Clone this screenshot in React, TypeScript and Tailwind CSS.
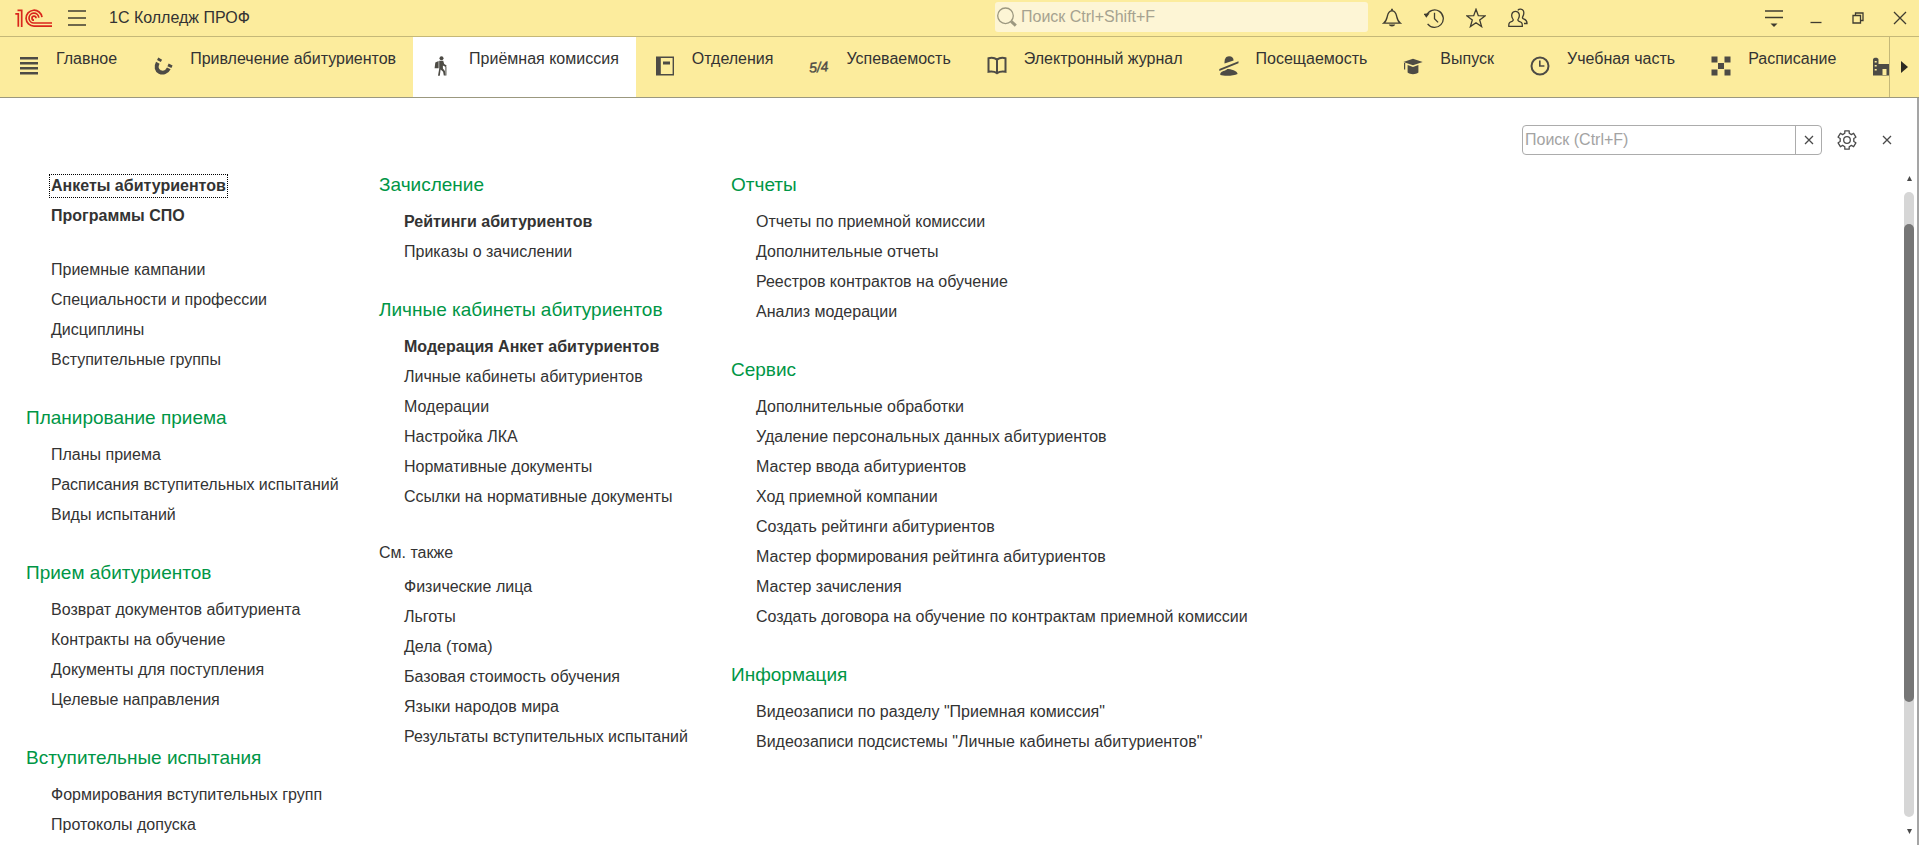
import type { ReactNode } from "react";
import clsx from "clsx";

interface Item {
    name: string;
    bold?: boolean;
    focused?: boolean;
}

interface Group {
    title?: string;
    plain?: boolean;
    items: Item[];
}

interface Tab {
    name: string;
    icon: ReactNode;
    active?: boolean;
}

const list = (...names: string[]): Item[] => names.map((name) => ({ name }));

const columns: Group[][] = [
    [
        {
            items: [
                { name: "Анкеты абитуриентов", bold: true, focused: true },
                { name: "Программы СПО", bold: true },
            ],
        },
        {
            items: list(
                "Приемные кампании",
                "Специальности и профессии",
                "Дисциплины",
                "Вступительные группы"
            ),
        },
        {
            title: "Планирование приема",
            items: list(
                "Планы приема",
                "Расписания вступительных испытаний",
                "Виды испытаний"
            ),
        },
        {
            title: "Прием абитуриентов",
            items: list(
                "Возврат документов абитуриента",
                "Контракты на обучение",
                "Документы для поступления",
                "Целевые направления"
            ),
        },
        {
            title: "Вступительные испытания",
            items: list("Формирования вступительных групп", "Протоколы допуска"),
        },
    ],
    [
        {
            title: "Зачисление",
            items: [
                { name: "Рейтинги абитуриентов", bold: true },
                { name: "Приказы о зачислении" },
            ],
        },
        {
            title: "Личные кабинеты абитуриентов",
            items: [
                { name: "Модерация Анкет абитуриентов", bold: true },
                ...list(
                    "Личные кабинеты абитуриентов",
                    "Модерации",
                    "Настройка ЛКА",
                    "Нормативные документы",
                    "Ссылки на нормативные документы"
                ),
            ],
        },
        {
            title: "См. также",
            plain: true,
            items: list(
                "Физические лица",
                "Льготы",
                "Дела (тома)",
                "Базовая стоимость обучения",
                "Языки народов мира",
                "Результаты вступительных испытаний"
            ),
        },
    ],
    [
        {
            title: "Отчеты",
            items: list(
                "Отчеты по приемной комиссии",
                "Дополнительные отчеты",
                "Реестров контрактов на обучение",
                "Анализ модерации"
            ),
        },
        {
            title: "Сервис",
            items: list(
                "Дополнительные обработки",
                "Удаление персональных данных абитуриентов",
                "Мастер ввода абитуриентов",
                "Ход приемной компании",
                "Создать рейтинги абитуриентов",
                "Мастер формирования рейтинга абитуриентов",
                "Мастер зачисления",
                "Создать договора на обучение по контрактам приемной комиссии"
            ),
        },
        {
            title: "Информация",
            items: list(
                'Видеозаписи по разделу "Приемная комиссия"',
                'Видеозаписи подсистемы "Личные кабинеты абитуриентов"'
            ),
        },
    ],
];

// Section icons, filled
const Glyph = ({ children }: { children: ReactNode }) => (
    <svg
        viewBox="0 0 20 20"
        className="size-5 shrink-0 overflow-visible"
        fill="#4d4b45"
        aria-hidden="true"
    >
        {children}
    </svg>
);

// Title bar icons, outlined
const Line = ({ children }: { children: ReactNode }) => (
    <svg
        viewBox="0 0 20 20"
        className="size-5 shrink-0"
        fill="none"
        stroke="#3f3c30"
        strokeWidth="1.3"
        aria-hidden="true"
    >
        {children}
    </svg>
);

const tabs: Tab[] = [
    {
        name: "Главное",
        icon: <path d="M1 1h18v2.400H1zM1 6h18v2.400H1zM1 11h18v2.400H1zM1 16h18v2.400H1z" />,
    },
    {
        name: "Привлечение абитуриентов",
        icon: (
            <>
                <path
                    d="M4.800 6.800C2.600 10.800 3.600 14.400 6.600 15.900C10 17.500 14 16.200 15.800 12.400"
                    fill="none"
                    stroke="#4d4b45"
                    strokeWidth="4"
                />
                <path d="M5.300 1.600l3.800 2.200-1.300 2.300L4 3.900zM15.700 7.600l3.900 2-1.200 2.500-4-1.800z" />
            </>
        ),
    },
    {
        name: "Приёмная комиссия",
        active: true,
        icon: (
            <>
                <circle cx="9.500" cy="2.300" r="2" />
                <path d="M3.300 6.500L6.600 5v7.200H2.600z" />
                <path d="M7.200 4.800h4l1 3.200 2.400 1.600-.8 1.400-2.900-1.500v3.100l2 2.400.6 4.500h-1.700l-.7-3.800-2.500-2.300-.8 6.300H6l1.200-7z" />
                <path d="M13.400 10.500h1v9h-1z" />
            </>
        ),
    },
    {
        name: "Отделения",
        icon: (
            <>
                <path
                    d="M1 .5h18v19H1zM5.800 2v16H17.600V2z"
                    fillRule="evenodd"
                />
                <path d="M8 5.500h7v3H8z" />
            </>
        ),
    },
    {
        name: "Успеваемость",
        icon: (
            <text
                x="0"
                y="16"
                fontSize="14"
                fontStyle="italic"
                stroke="#4d4b45"
                strokeWidth="0.4"
                transform="rotate(-5 10 12)"
                fontFamily="Liberation Sans, sans-serif"
            >
                5/4
            </text>
        ),
    },
    {
        name: "Электронный журнал",
        icon: (
            <path
                d="M10 3.600C8 2 4 1.600 1.500 2.200v13.600c3-.5 6-.3 8.500 1.400 2.500-1.700 5.500-1.900 8.500-1.400V2.200C16 1.600 12 2 10 3.600zV17"
                fill="none"
                stroke="#4d4b45"
                strokeWidth="2"
            />
        ),
    },
    {
        name: "Посещаемость",
        icon: (
            <>
                <path d="M5.500 7.600C5.300 3 6.800.3 10 .3s4.500 2 4.600 4.200z" />
                <path d="M.3 13.100L19.500 5.300v1.900L.3 15zM1.300 17.500c1-2.500 5-2.500 7-4.500 3.500 0 10 1.500 10.300 5-4 2.200-14 2.200-17.300 1z" />
            </>
        ),
    },
    {
        name: "Выпуск",
        icon: (
            <>
                <path d="M.3 6L10 2.800 19.700 6 10 9.200z" />
                <path d="M4.600 9l5.400 1.900L15.400 9v7.600c-2.800 2.200-8 2.200-10.800 0zM1 7h1.200v6.400H1z" />
            </>
        ),
    },
    {
        name: "Учебная часть",
        icon: (
            <>
                <circle cx="10" cy="10" r="8.500" fill="none" stroke="#4d4b45" strokeWidth="2" />
                <path d="M9.800 4.500V10h4.600" fill="none" stroke="#4d4b45" strokeWidth="1.600" />
            </>
        ),
    },
    {
        name: "Расписание",
        icon: (
            <path d="M.5.5h6v6h-6zM13.500 .5h6v6h-6zM7 7h6v6H7zM.5 13.500h6v6h-6zM13.500 13.500h6v6h-6z" />
        ),
    },
    {
        name: "",
        icon: (
            <path
                d="M1 3.500C1 1 6.500 1 6.500 3.500V8H20v11.500H1zM2.700 5v1.500h2V5zM2.700 9v1.500h2V9zM2.700 13v1.500h2V13zM10.500 13v6h4v-6z"
                fillRule="evenodd"
            />
        ),
    },
];

const Logo = () => (
    <svg viewBox="0 0 38 20" className="h-5 w-[38px]" fill="none" stroke="#d9261c" strokeWidth="1.700" aria-hidden="true">
        <path d="M.3 5.800h3v13" />
        <path d="M2.500 2.400h4.200v16.500" />
        <path d="M27 9.200A8 8 0 1 0 19 18.200h18" />
        <path d="M23.800 9.800A4.900 4.900 0 1 0 19 15h18" />
        <path d="M21 10.200A2 2 0 1 0 19 12.200" />
    </svg>
);

const BarButton = ({ label, children }: { label: string; children: ReactNode }) => (
    <button
        type="button"
        aria-label={label}
        className="flex h-9 w-[42px] shrink-0 items-center justify-center hover:bg-[#f3df7c]"
    >
        <Line>{children}</Line>
    </button>
);

const TitleBar = () => (
    <header className="grid h-[37px] shrink-0 grid-cols-[995fr_373fr_551fr] border-b border-[#c5b878]">
        <div className="flex items-center pl-[15px]">
            <Logo />
            <button type="button" aria-label="Меню" className="ml-3 flex size-6 items-center justify-center">
                <Line>
                    <path d="M1 3h18M1 10h18M1 17h18" strokeWidth="1.600" />
                </Line>
            </button>
            <h1 className="ml-5 leading-5">1С Колледж ПРОФ</h1>
        </div>

        <label className="mt-0.5 flex h-[30px] items-center rounded-[3px] bg-[#fdf5d5] pl-0.5">
            <svg viewBox="0 0 20 20" className="size-5" fill="none" stroke="#9c9880" aria-hidden="true">
                <circle cx="8.500" cy="8.800" r="7.800" strokeWidth="1.300" />
                <path d="M14.200 14.400l4.600 4.200" strokeWidth="3" />
            </svg>
            <input
                type="text"
                aria-label="Поиск"
                placeholder="Поиск Ctrl+Shift+F"
                className="ml-1 min-w-0 flex-1 bg-transparent leading-5 outline-none placeholder:text-[#a6a290]"
            />
        </label>

        <div className="flex pl-[3px]">
            <BarButton label="Уведомления">
                <path d="M1.500 15.200h17c-3-2-3.200-4-3.900-7.200C14 5 12.500 2.800 10 2.800S6 5 5.400 8c-.7 3.200-.9 5.200-3.900 7.200z" />
                <path d="M10 .800v2" strokeWidth="1.800" />
                <path d="M6.800 16.600h6.400c-.6 2.600-5.800 2.600-6.400 0z" fill="#3f3c30" stroke="none" />
            </BarButton>
            <BarButton label="История">
                <path d="M2.600 7.200A8.700 8.700 0 1 1 3.600 15.800" />
                <path d="M10.500 4.800v6l3.600 3.600" />
                <path d="M-.300 5.800l6-.600-3.400 4.600z" fill="#3f3c30" stroke="none" />
            </BarButton>
            <BarButton label="Избранное">
                <path d="M10 1.300l2.300 6.400 6.700.2-5.300 4.100 1.900 6.600L10 14.700l-5.600 3.900L6.300 12 1 7.900l6.700-.2z" />
            </BarButton>
            <BarButton label="Пользователи">
                <path d="M.800 18.300c-.3-3.800 1.200-4.300 3.300-5 1.700-.6 1.200-1.700.5-2.800C2.800 7.300 3.800 3.300 7.500 3.300s4.700 4 3 7.200c-.7 1.100-1.200 2.200.5 2.800 2.100.7 3.600 1.200 3.300 5z" />
                <path d="M9.800 2.300c1.400-1.800 4.800-1.400 5.700.8.7 1.900.2 3.800-.7 5.500-.6 1.100-.4 1.800.8 2.300 2.400.9 3.600 1.600 3.400 4.600h-3" />
            </BarButton>

            <div className="-mr-0.5 ml-auto flex">
                <BarButton label="Сервис и настройки">
                    <path d="M1 3h18M1 9.500h18" strokeWidth="1.600" />
                    <path d="M6.500 15.500h7L10 19z" fill="#3f3c30" stroke="none" />
                </BarButton>
                <BarButton label="Свернуть">
                    <path d="M4.500 14.500h11" />
                </BarButton>
                <BarButton label="Развернуть">
                    <path d="M5 7.500h7.500V15H5zM7.500 7V5H15v7.500h-2" />
                </BarButton>
                <BarButton label="Закрыть">
                    <path d="M4 4l12 12M16 4L4 16" />
                </BarButton>
            </div>
        </div>
    </header>
);

const SectionBar = () => (
    <div className="flex h-[61px] shrink-0 border-b border-[#9b987f]">
        <nav className="flex min-w-0 flex-1 overflow-hidden">
            {tabs.map((tab, i) => (
                <a
                    key={i}
                    href="#"
                    aria-label={tab.name || "Ещё"}
                    className={clsx(
                        "flex shrink-0 gap-[17px] pr-[17px] pl-[19px]",
                        tab.active && "bg-white"
                    )}
                >
                    <span className="pt-[19px]">
                        <Glyph>{tab.icon}</Glyph>
                    </span>
                    <span className="pt-3 leading-5 whitespace-nowrap">{tab.name}</span>
                </a>
            ))}
        </nav>
        <button
            type="button"
            aria-label="Прокрутить вправо"
            className="flex w-[30px] shrink-0 items-center justify-center border-l border-[#c5b878]"
        >
            <svg viewBox="0 0 7 12" className="h-3 w-[7px]" fill="#2d2b22" aria-hidden="true">
                <path d="M0 0l7 6-7 6z" />
            </svg>
        </button>
    </div>
);

const Cross = () => (
    <svg viewBox="0 0 10 10" className="size-2.5" fill="none" stroke="#4a4a4a" strokeWidth="1.300" aria-hidden="true">
        <path d="M1 1l8 8M9 1L1 9" />
    </svg>
);

const Toolbar = () => (
    <div className="flex items-center justify-end pt-[27px] pr-5 pb-[9px]">
        <div className="flex h-[30px] w-[300px] rounded border border-[#acacac]">
            <input
                type="text"
                aria-label="Поиск по разделу"
                placeholder="Поиск (Ctrl+F)"
                className="min-w-0 flex-1 pl-0.5 leading-5 outline-none placeholder:text-[#a3a3a3]"
            />
            <button
                type="button"
                aria-label="Очистить"
                className="flex w-[26px] items-center justify-center border-l border-[#acacac]"
            >
                <Cross />
            </button>
        </div>
        <button type="button" aria-label="Настройка" className="ml-[15px]">
            <svg viewBox="0 0 20 20" className="size-5" fill="none" stroke="#4a4a4a" strokeWidth="1.300" aria-hidden="true">
                <path
                    strokeLinejoin="round"
                    d="M7.800.8h4.400v2.500l2.200 1.300 2.200-1.300 2.300 3.900-2.100 1.300v3l2.100 1.300-2.300 3.900-2.200-1.300-2.200 1.300v2.500H7.800v-2.500l-2.200-1.300-2.200 1.300-2.300-3.900 2.100-1.300v-3L1.100 7.200l2.300-3.900 2.200 1.300 2.200-1.300z"
                />
                <circle cx="10" cy="10" r="3.300" />
            </svg>
        </button>
        <button type="button" aria-label="Закрыть панель" className="ml-5 flex size-5 items-center justify-center">
            <Cross />
        </button>
    </div>
);

const GroupBlock = ({ title, plain, items }: Group) => (
    <section>
        {title && (
            <h2
                className={clsx(
                    "flex items-center pb-0.5",
                    plain ? "h-9" : "h-[41px] text-[19px] text-[#009646]"
                )}
            >
                {title}
            </h2>
        )}
        <ul className="pl-[25px]">
            {items.map((item) => (
                <li key={item.name} className="flex h-[30px] items-center whitespace-nowrap">
                    <a
                        href="#"
                        className={clsx(
                            "leading-5 hover:underline",
                            item.bold && "font-bold",
                            item.focused && "outline-1 outline-offset-1 outline-black outline-dotted"
                        )}
                    >
                        {item.name}
                    </a>
                </li>
            ))}
        </ul>
    </section>
);

const ScrollBar = () => (
    <div className="mr-[3px] flex w-2.5 shrink-0 flex-col" aria-hidden="true">
        <div className="flex h-7 items-center justify-center">
            <svg viewBox="0 0 5 5" className="size-[5px]" fill="#4a4a4a">
                <path d="M2.500 0L5 5H0z" />
            </svg>
        </div>
        <div className="grid flex-1 grid-rows-[32fr_479fr_115fr] rounded-full bg-[#d6d6d6]">
            <div className="row-start-2 rounded-full bg-[#767676]" />
        </div>
        <div className="flex h-7 items-center justify-center">
            <svg viewBox="0 0 5 5" className="size-[5px]" fill="#4a4a4a">
                <path d="M0 0h5L2.500 5z" />
            </svg>
        </div>
    </div>
);

const App = () => {
    return (
        <div className="flex h-screen flex-col overflow-hidden bg-[#fcec9d] font-['Liberation_Sans',Arial,sans-serif] text-base text-[#333333]">
            <TitleBar />
            <SectionBar />
            <main className="flex min-h-0 flex-1 flex-col border-r-2 border-[#a5a5a5] bg-white">
                <Toolbar />
                <div className="flex min-h-0 flex-1">
                    <div className="grid min-w-0 flex-1 grid-cols-[353px_352px_1fr] overflow-hidden pt-0.5 pl-[26px]">
                        {columns.map((groups, i) => (
                            <div
                                key={i}
                                className={clsx("flex flex-col gap-6", !groups[0].title && "pt-[5px]")}
                            >
                                {groups.map((group) => (
                                    <GroupBlock key={group.items[0].name} {...group} />
                                ))}
                            </div>
                        ))}
                    </div>
                    <ScrollBar />
                </div>
            </main>
        </div>
    );
};

export default App;
